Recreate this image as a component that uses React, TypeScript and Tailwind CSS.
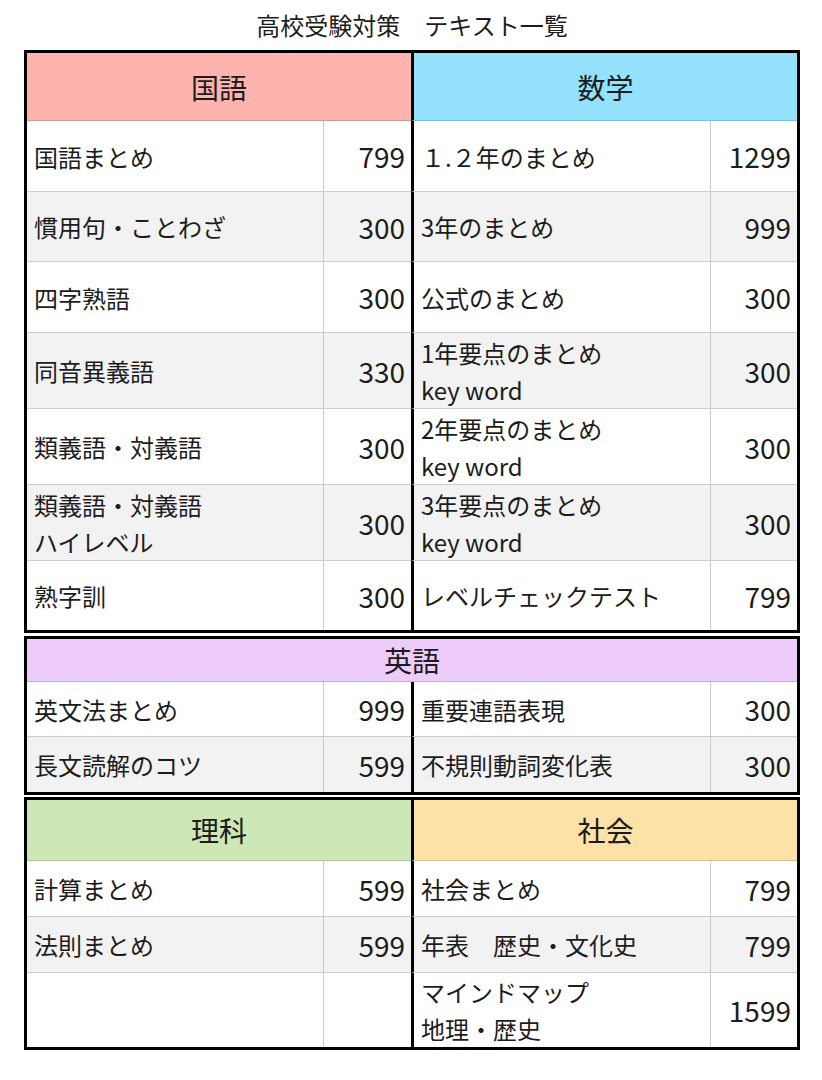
import React from 'react';

type Item = { name: string[]; price: string };
type Row = { h: string; left: Item | null; right: Item };

const font = { fontFamily: '"Noto Sans CJK JP", "Noto Sans", sans-serif' };

const mainRows: Row[] = [
  { h: 'h-[71px]', left: { name: ['国語まとめ'], price: '799' }, right: { name: ['１.２年のまとめ'], price: '1299' } },
  { h: 'h-[70px]', left: { name: ['慣用句・ことわざ'], price: '300' }, right: { name: ['3年のまとめ'], price: '999' } },
  { h: 'h-[71px]', left: { name: ['四字熟語'], price: '300' }, right: { name: ['公式のまとめ'], price: '300' } },
  { h: 'h-[76px]', left: { name: ['同音異義語'], price: '330' }, right: { name: ['1年要点のまとめ', 'key word'], price: '300' } },
  { h: 'h-[76px]', left: { name: ['類義語・対義語'], price: '300' }, right: { name: ['2年要点のまとめ', 'key word'], price: '300' } },
  { h: 'h-[76px]', left: { name: ['類義語・対義語', 'ハイレベル'], price: '300' }, right: { name: ['3年要点のまとめ', 'key word'], price: '300' } },
  { h: 'h-[69px]', left: { name: ['熟字訓'], price: '300' }, right: { name: ['レベルチェックテスト'], price: '799' } },
];

const englishRows: Row[] = [
  { h: 'h-[55px]', left: { name: ['英文法まとめ'], price: '999' }, right: { name: ['重要連語表現'], price: '300' } },
  { h: 'h-[55px]', left: { name: ['長文読解のコツ'], price: '599' }, right: { name: ['不規則動詞変化表'], price: '300' } },
];

const bottomRows: Row[] = [
  { h: 'h-[56px]', left: { name: ['計算まとめ'], price: '599' }, right: { name: ['社会まとめ'], price: '799' } },
  { h: 'h-[56px]', left: { name: ['法則まとめ'], price: '599' }, right: { name: ['年表　歴史・文化史'], price: '799' } },
  { h: 'h-[74px]', left: null, right: { name: ['マインドマップ', '地理・歴史'], price: '1599' } },
];

function Name({ lines }: { lines: string[] }) {
  return (
    <div className="flex flex-col justify-center">
      {lines.map((l) => (
        <span key={l} className="text-[24px] leading-[37px] whitespace-nowrap">{l}</span>
      ))}
    </div>
  );
}

function Rows({ rows }: { rows: Row[] }) {
  return (
    <>
      {rows.map((r, i) => {
        const bg = i % 2 === 1 ? 'bg-[#f2f2f2]' : 'bg-white';
        const line = i < rows.length - 1 ? 'border-b border-[#cccccc]' : '';
        return (
          <React.Fragment key={i}>
            <div className={`${r.h} ${bg} ${line} flex items-center pl-[7px]`}>
              {r.left && <Name lines={r.left.name} />}
            </div>
            <div className={`${r.h} ${bg} ${line} border-l border-l-[#cccccc] flex items-center justify-end pr-[6px] text-[28px]`}>
              {r.left?.price}
            </div>
            <div className={`${r.h} ${bg} ${line} border-l-[3px] border-l-black flex items-center pl-[7px]`}>
              <Name lines={r.right.name} />
            </div>
            <div className={`${r.h} ${bg} ${line} border-l border-l-[#cccccc] flex items-center justify-end pr-[6px] text-[28px]`}>
              {r.right.price}
            </div>
          </React.Fragment>
        );
      })}
    </>
  );
}

function Header({ label, bg, h, divider }: { label: string; bg: string; h: string; divider?: boolean }) {
  return (
    <div className={`col-span-2 ${h} ${bg} ${divider ? 'border-l-[3px] border-l-black' : ''} border-b border-b-black/15 flex items-center justify-center text-[28px]`}>
      {label}
    </div>
  );
}

export default function App() {
  return (
    <div className="w-[822px] h-[1080px] bg-white text-[#1c1c1c]" style={font}>
      <div className="h-[50px] flex items-center justify-center pl-[2px] text-[24px]">高校受験対策　テキスト一覧</div>

      <div className="ml-[24px] w-[776px] border-[3px] border-black grid grid-cols-[296px_88px_299px_87px]">
        <Header label="国語" bg="bg-[#ffb3af]" h="h-[68px]" />
        <Header label="数学" bg="bg-[#93e1fb]" h="h-[68px]" divider />
        <Rows rows={mainRows} />
      </div>

      <div className="ml-[24px] mt-[3px] w-[776px] border-[3px] border-black grid grid-cols-[296px_88px_299px_87px]">
        <div className="col-span-4 h-[43px] bg-[#edcbfb] border-b border-b-black/15 flex items-center justify-center text-[28px]">英語</div>
        <Rows rows={englishRows} />
      </div>

      <div className="ml-[24px] mt-[2px] w-[776px] border-[3px] border-black grid grid-cols-[296px_88px_299px_87px]">
        <Header label="理科" bg="bg-[#cde7b7]" h="h-[61px]" />
        <Header label="社会" bg="bg-[#fee1a6]" h="h-[61px]" divider />
        <Rows rows={bottomRows} />
      </div>
    </div>
  );
}
